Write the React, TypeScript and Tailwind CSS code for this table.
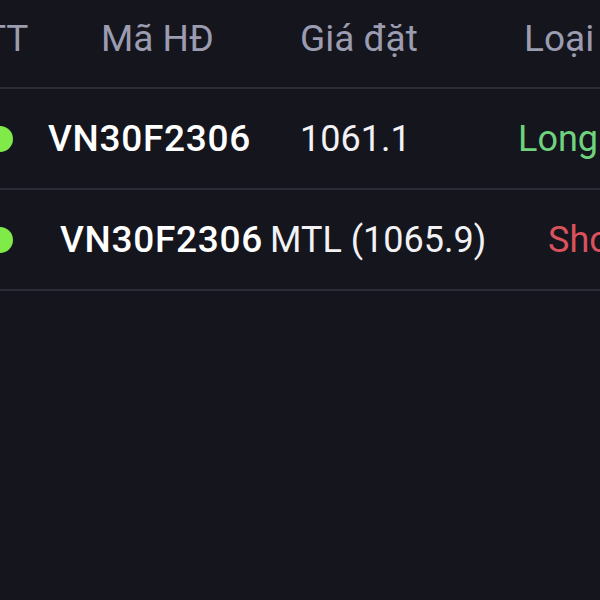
const font = { fontFamily: "Roboto, 'Noto Sans', sans-serif" };

type Order = {
  code: string;
  codeLeft: string;
  price: string;
  priceCell: string;
  side: string;
  sideClass: string;
};

const orders: Order[] = [
  {
    code: "VN30F2306",
    codeLeft: "ml-[35px] w-[252px]",
    price: "1061.1",
    priceCell: "w-[218px]",
    side: "Long",
    sideClass: "text-[#6fd37d]",
  },
  {
    code: "VN30F2306",
    codeLeft: "ml-[47px] w-[210px]",
    price: "MTL (1065.9)",
    priceCell: "w-[278px]",
    side: "Short",
    sideClass: "text-[#d9525c]",
  },
];

export default function App() {
  return (
    <div
      className="min-h-screen w-[600px] overflow-hidden bg-[#15151e] antialiased"
      style={font}
    >
      <div className="flex h-[89px] items-start border-b-2 border-[#2c2c39] pt-[20px] text-[37px] leading-none text-[#9c9cb0]">
        <span className="-ml-[38px] w-[139px] shrink-0 whitespace-nowrap">STT</span>
        <span className="w-[199px] shrink-0 whitespace-nowrap">Mã HĐ</span>
        <span className="w-[224px] shrink-0 whitespace-nowrap">Giá đặt</span>
        <span className="shrink-0 whitespace-nowrap">Loại</span>
      </div>

      {orders.map((o, i) => (
        <div
          key={i}
          className="flex h-[101px] items-center border-b-2 border-[#2c2c39] text-[36px] leading-none"
        >
          <span className="-ml-[13px] h-[26px] w-[26px] shrink-0 rounded-full bg-[#80ea48]" />
          <span
            className={`${o.codeLeft} shrink-0 whitespace-nowrap text-[37px] font-medium tracking-[0.7px] text-white`}
          >
            {o.code}
          </span>
          <span className={`${o.priceCell} shrink-0 whitespace-nowrap text-[#f2f2f4]`}>
            {o.price}
          </span>
          <span className={`${o.sideClass} shrink-0 whitespace-nowrap`}>{o.side}</span>
        </div>
      ))}
    </div>
  );
}
